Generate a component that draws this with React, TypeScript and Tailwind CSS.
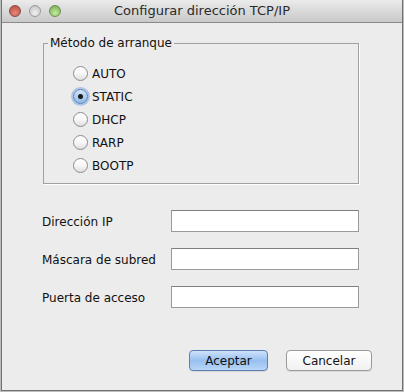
import React from "react";

const font = { fontFamily: '"DejaVu Sans", "Liberation Sans", sans-serif' };

function Radio({ label, checked }: { label: string; checked?: boolean }) {
  return (
    <div className="flex h-[23px] items-center gap-[4px]">
      {checked ? (
        <span className="flex h-[15px] w-[15px] items-center justify-center rounded-full border border-[#5a7fb5] bg-gradient-to-b from-[#d5e6f8] to-[#8fb8e6] shadow-[0_0_0_2px_rgba(120,165,225,0.55)]">
          <span className="h-[5px] w-[5px] rounded-full bg-[#1a1a1a]" />
        </span>
      ) : (
        <span className="h-[15px] w-[15px] rounded-full border border-[#8d8d8d] bg-gradient-to-b from-[#ffffff] via-[#f7f7f7] to-[#dedede]" />
      )}
      <span className="text-[12px] text-[#111]">{label}</span>
    </div>
  );
}

function Field({ label }: { label: string }) {
  return (
    <div className="flex items-end">
      <span className="w-[129px] pb-[1px] text-[12px] text-[#111]">{label}</span>
      <div className="h-[22px] w-[188px] border border-[#9a9a9a] border-t-[#7f7f7f] bg-white" />
    </div>
  );
}

export default function App() {
  return (
    <div className="h-[392px] w-[404px] bg-[#bdbdbd] px-[1px] pb-[1px]" style={font}>
      <div className="flex h-full flex-col border-x border-b border-[#707070] bg-[#ececec]">
        <div className="relative flex h-[23px] items-center justify-center border-b border-[#8a8a8a] bg-gradient-to-b from-[#ebebeb] to-[#c9c9c9]">
          <div className="absolute left-[7px] top-[5px] flex gap-[8px]">
            <span className="h-[12px] w-[12px] rounded-full border border-[#8a4a44] bg-[radial-gradient(circle_at_50%_70%,#e8887a,#b4463c)]" />
            <span className="h-[12px] w-[12px] rounded-full border border-[#9a9a9a] bg-[radial-gradient(circle_at_50%_70%,#f2f2f2,#bdbdbd)]" />
            <span className="h-[12px] w-[12px] rounded-full border border-[#6f8f55] bg-[radial-gradient(circle_at_50%_70%,#c6ec9c,#6fa64a)]" />
          </div>
          <span className="text-[13px] text-[#2a2a2a]">Configurar dirección TCP/IP</span>
        </div>

        <fieldset className="ml-[41px] mt-[11px] h-[150px] w-[316px] border border-[#a0a0a0] shadow-[1px_1px_0_#ffffff]">
          <legend className="ml-[4px] px-[2px] text-[12px] text-[#111]">Método de arranque</legend>
          <div className="pl-[29px] pt-[10px]">
            <Radio label="AUTO" />
            <Radio label="STATIC" checked />
            <Radio label="DHCP" />
            <Radio label="RARP" />
            <Radio label="BOOTP" />
          </div>
        </fieldset>

        <div className="ml-[40px] mt-[26px] flex flex-col gap-[16px]">
          <Field label="Dirección IP" />
          <Field label="Máscara de subred" />
          <Field label="Puerta de acceso" />
        </div>

        <div className="mr-[30px] mt-[42px] flex justify-end gap-[18px]">
          <button className="h-[21px] w-[79px] rounded-[4px] border border-[#5b7fb0] bg-gradient-to-b from-[#cfe2fa] via-[#97c0f0] to-[#b8d6f8] text-[12px] text-[#111] shadow-[0_1px_0_rgba(0,0,0,0.08)]">
            Aceptar
          </button>
          <button className="h-[21px] w-[86px] rounded-[4px] border border-[#9a9a9a] bg-gradient-to-b from-[#ffffff] to-[#f1f1f1] text-[12px] text-[#111] shadow-[0_1px_0_rgba(0,0,0,0.08)]">
            Cancelar
          </button>
        </div>
      </div>
    </div>
  );
}
